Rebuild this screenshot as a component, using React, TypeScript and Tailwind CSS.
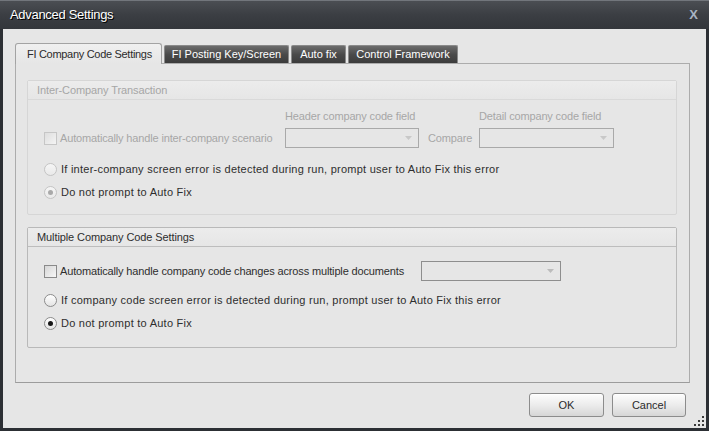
import React from "react";

const tabs = [
  { label: "FI Posting Key/Screen", w: "w-[125px]" },
  { label: "Auto fix", w: "w-[55px]" },
  { label: "Control Framework", w: "w-[110px]" },
];

function Radio({ checked, disabled }: { checked?: boolean; disabled?: boolean }) {
  return (
    <span
      className={`flex h-[13px] w-[13px] shrink-0 items-center justify-center rounded-full border ${
        disabled
          ? "border-[#c4c4c4] bg-gradient-to-b from-[#f6f6f6] to-[#e9e9e9]"
          : "border-[#8c8c8c] bg-gradient-to-b from-[#ffffff] to-[#e4e4e4]"
      }`}
    >
      {checked && (
        <span className={`h-[5px] w-[5px] rounded-full ${disabled ? "bg-[#a9a9a9]" : "bg-[#161616]"}`} />
      )}
    </span>
  );
}

function Checkbox({ disabled }: { disabled?: boolean }) {
  return (
    <span
      className={`block h-[13px] w-[13px] shrink-0 border ${
        disabled
          ? "border-[#c6c6c6] bg-gradient-to-br from-[#dedede] to-[#f4f4f4]"
          : "border-[#8a8a8a] bg-gradient-to-br from-[#d6d6d6] to-[#f7f7f7]"
      }`}
    />
  );
}

function Combo({ width, disabled }: { width: string; disabled?: boolean }) {
  return (
    <div
      className={`flex h-[20px] items-center justify-end pr-[6px] border ${width} ${
        disabled ? "border-[#a9a9a9]" : "border-[#8e8e8e]"
      } bg-[#e6e6e6]`}
    >
      <svg width="7" height="4" viewBox="0 0 7 4">
        <path d="M0 0h7L3.5 4z" fill={disabled ? "#c8c8c8" : "#bcbcbc"} />
      </svg>
    </div>
  );
}

function GroupHeader({ title, disabled }: { title: string; disabled?: boolean }) {
  return (
    <div
      className={`flex h-[19px] items-center pl-[9px] tracking-[-0.1px] border-b bg-gradient-to-b from-[#ececec] to-[#e6e6e6] ${
        disabled ? "border-[#d9d9d9] text-[#a6a6a6]" : "border-[#bdbdbd] text-[#2e2e2e]"
      }`}
    >
      {title}
    </div>
  );
}

export default function App() {
  return (
    <div className="flex h-[431px] w-[709px] flex-col bg-[#2c2f34] font-['Liberation_Sans',Arial,sans-serif] text-[11px] text-[#2e2e2e]">
      {/* title bar */}
      <div className="flex h-[29px] shrink-0 items-center justify-between border-t border-[#72767c] bg-gradient-to-b from-[#4b4e53] via-[#3b3e43] to-[#33363b] pl-[10px] pr-[11px]">
        <span className="text-[13px] tracking-[-0.3px] text-white [text-shadow:1px_1px_0_#000]">Advanced Settings</span>
        <span className="text-[13px] font-bold text-[#a8b4c2]">X</span>
      </div>

      {/* body */}
      <div className="relative mx-[3px] mb-[3px] flex flex-1 flex-col bg-[#e6e6e6] pl-[12px] pr-[16px] pt-[14px]">
        {/* tab strip */}
        <div className="flex h-[20px] items-end gap-[2px]">
          <div className="relative z-10 -mb-px flex h-[21px] w-[147px] items-center rounded-t-[3px] border border-b-0 border-[#a3a3a3] bg-gradient-to-b from-[#f0f0f0] to-[#e6e6e6] pl-[11px] tracking-[-0.3px] text-[#2b2b2b]">
            FI Company Code Settings
          </div>
          {tabs.map((t) => (
            <div
              key={t.label}
              className={`flex h-[18px] ${t.w} items-center justify-center rounded-t-[2px] border border-b-0 border-[#8a8a8a] bg-gradient-to-b from-[#6c6c6c] via-[#4a4a4a] to-[#3c3c3c] text-white`}
            >
              {t.label}
            </div>
          ))}
        </div>

        {/* tab panel */}
        <div className="flex h-[320px] flex-col gap-[12px] border border-[#acacac] border-b-[#9c9c9c] pl-[11px] pr-[12px] pt-[16px]">
          {/* Inter-Company Transaction */}
          <div className="h-[135px] rounded-[2px] border border-[#d6d6d6]">
            <GroupHeader title="Inter-Company Transaction" disabled />
            <div className="pl-[16px] pt-[9px]">
              <div className="flex items-end tracking-[-0.15px]">
                <div className="flex h-[20px] w-[241px] items-center gap-[3px] text-[#a6a6a6]">
                  <Checkbox disabled />
                  <span>Automatically handle inter-company scenario</span>
                </div>
                <div className="flex flex-col">
                  <span className="mb-[5px] h-[14px] leading-[14px] text-[#a6a6a6]">Header company code field</span>
                  <Combo width="w-[134px]" disabled />
                </div>
                <div className="flex h-[20px] w-[60px] items-center pl-[9px] text-[#a6a6a6]">Compare</div>
                <div className="flex flex-col">
                  <span className="mb-[5px] h-[14px] leading-[14px] text-[#a6a6a6]">Detail company code field</span>
                  <Combo width="w-[135px]" disabled />
                </div>
              </div>
              <div className="mt-[10px] flex h-[23px] items-center gap-[4px] tracking-[0.25px]">
                <Radio disabled />
                <span>If inter-company screen error is detected during run, prompt user to Auto Fix this error</span>
              </div>
              <div className="flex h-[23px] items-center gap-[4px] tracking-[0.25px]">
                <Radio checked disabled />
                <span>Do not prompt to Auto Fix</span>
              </div>
            </div>
          </div>

          {/* Multiple Company Code Settings */}
          <div className="h-[121px] rounded-[2px] border border-[#b9b9b9]">
            <GroupHeader title="Multiple Company Code Settings" />
            <div className="pl-[16px] pt-[14px]">
              <div className="flex h-[20px] items-center tracking-[-0.15px]">
                <div className="flex w-[377px] items-center gap-[3px]">
                  <Checkbox />
                  <span>Automatically handle company code changes across multiple documents</span>
                </div>
                <Combo width="w-[140px]" />
              </div>
              <div className="mt-[8px] flex h-[23px] items-center gap-[4px] tracking-[0.25px]">
                <Radio />
                <span>If company code screen error is detected during run, prompt user to Auto Fix this error</span>
              </div>
              <div className="flex h-[23px] items-center gap-[4px] tracking-[0.25px]">
                <Radio checked />
                <span>Do not prompt to Auto Fix</span>
              </div>
            </div>
          </div>
        </div>

        {/* buttons */}
        <div className="mt-[10px] flex justify-end gap-[8px] pr-[4px]">
          <button className="h-[24px] w-[75px] rounded-[3px] border border-[#8c8c8c] bg-gradient-to-b from-[#fdfdfd] via-[#ececec] to-[#d6d6d6] text-[#2b2b2b] shadow-[inset_0_1px_0_#ffffff]">
            OK
          </button>
          <button className="h-[24px] w-[74px] rounded-[3px] border border-[#8c8c8c] bg-gradient-to-b from-[#fdfdfd] via-[#ececec] to-[#d6d6d6] text-[#2b2b2b] shadow-[inset_0_1px_0_#ffffff]">
            Cancel
          </button>
        </div>

        {/* resize grip */}
        <svg className="absolute bottom-[1px] right-[1px]" width="11" height="11" viewBox="0 0 11 11">
          <g fill="#3a3a3a">
            <rect x="8" y="0" width="2" height="2" />
            <rect x="4" y="4" width="2" height="2" />
            <rect x="8" y="4" width="2" height="2" />
            <rect x="0" y="8" width="2" height="2" />
            <rect x="4" y="8" width="2" height="2" />
            <rect x="8" y="8" width="2" height="2" />
          </g>
        </svg>
      </div>
    </div>
  );
}
